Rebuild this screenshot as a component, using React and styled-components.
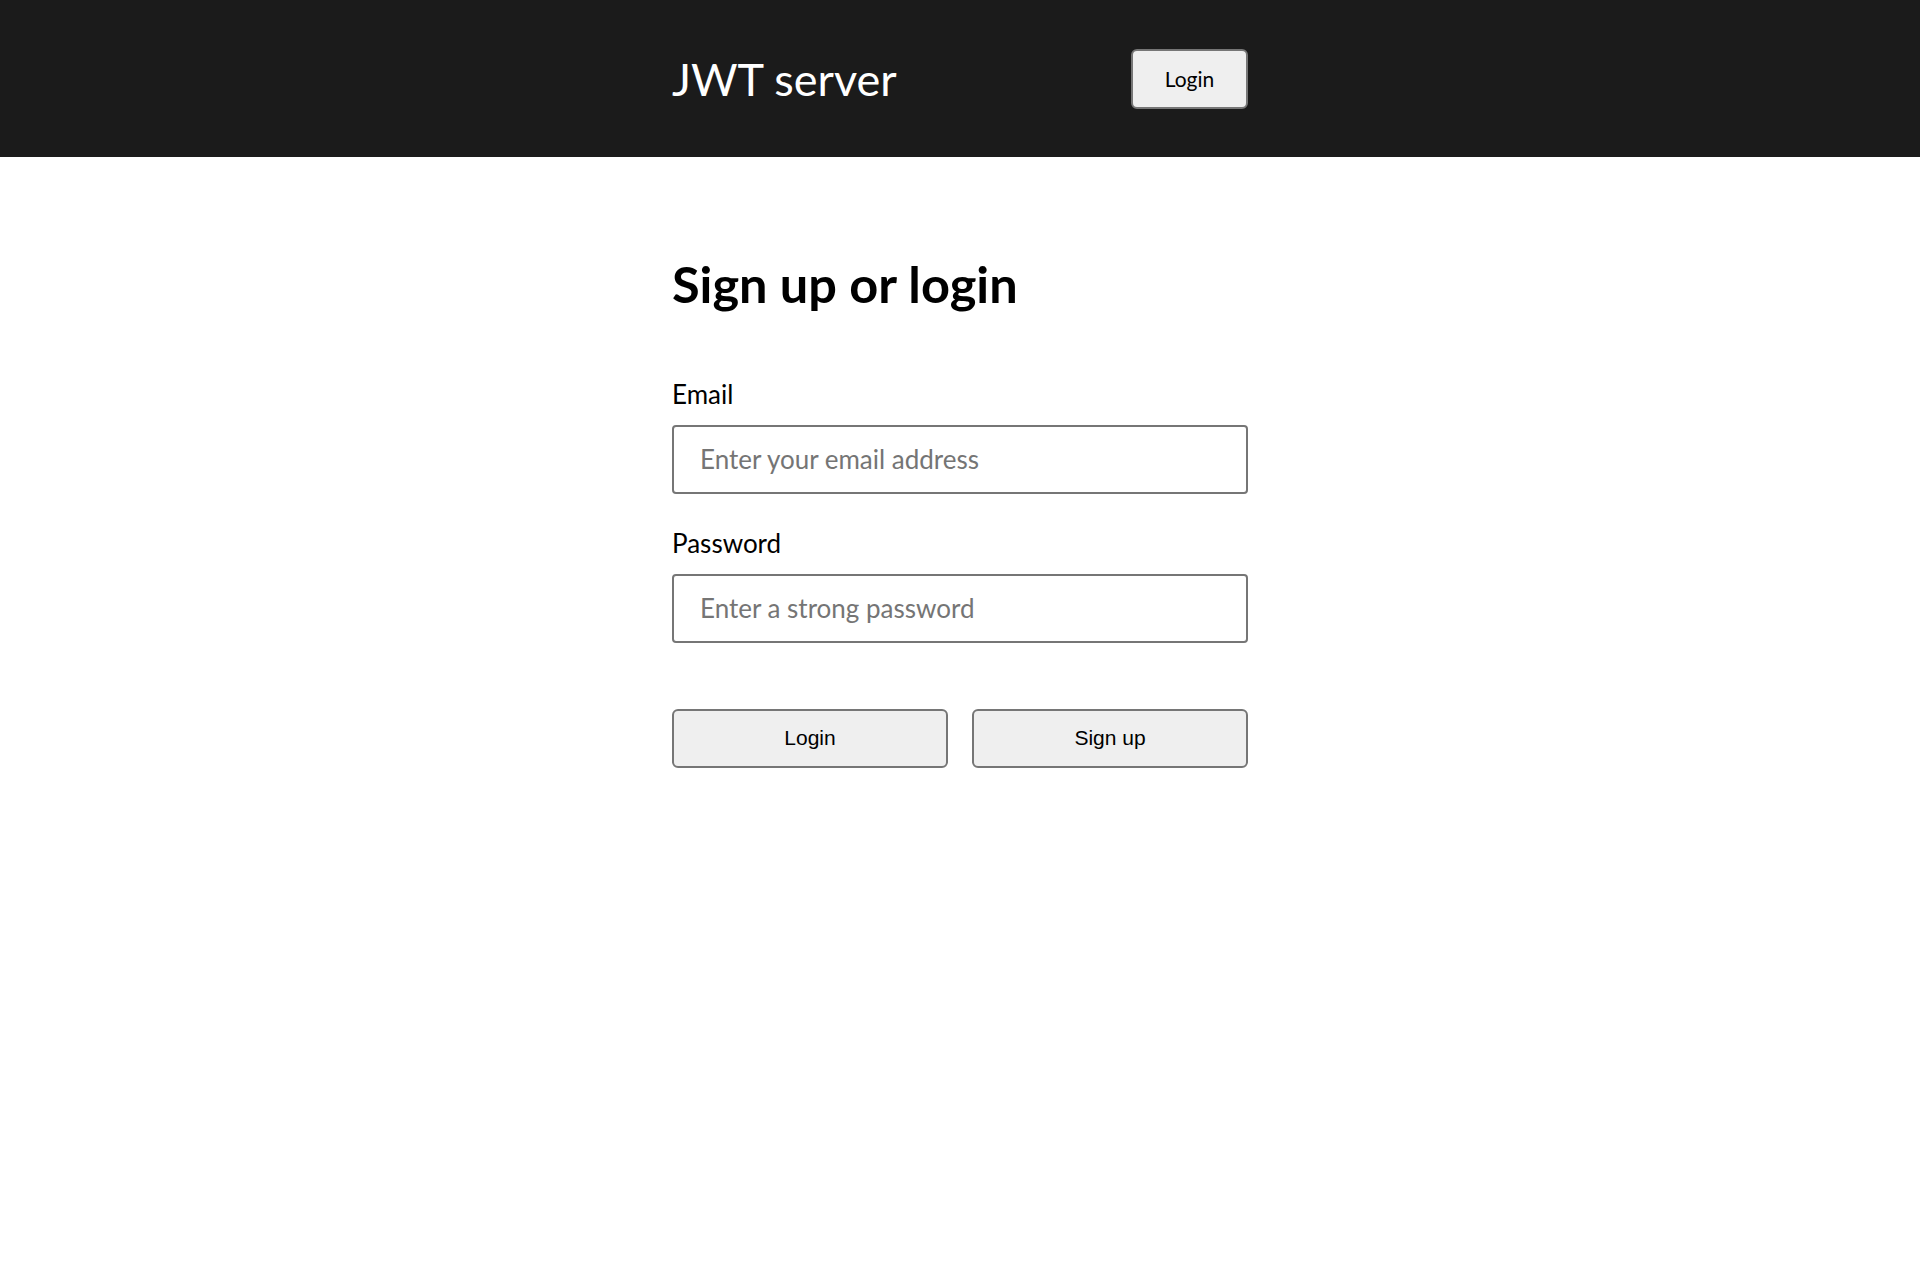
import React from 'react'
import styled, { createGlobalStyle } from 'styled-components'

const GlobalStyle = createGlobalStyle`
	html, body {
		margin: 0;
		padding: 0;
		background: #ffffff;
		font-family: Lato, "Noto Sans", sans-serif;
		color: #000000;
	}
	* {
		box-sizing: border-box;
	}
`

function App() {
	const [email, setEmail] = React.useState('')
	const [password, setPassword] = React.useState('')

	return (
		<>
			<GlobalStyle />
			<Header>
				<HeaderInner>
					<AppName>JWT server</AppName>
					<HeaderButton type='button'>Login</HeaderButton>
				</HeaderInner>
			</Header>
			<Main>
				<Title>Sign up or login</Title>
				<Form onSubmit={(e) => e.preventDefault()}>
					<Field>
						<Label htmlFor='email'>Email</Label>
						<Input
							id='email'
							type='email'
							value={email}
							onChange={(e) => setEmail(e.target.value)}
							placeholder='Enter your email address'
						/>
					</Field>
					<Field>
						<Label htmlFor='password'>Password</Label>
						<Input
							id='password'
							type='password'
							value={password}
							onChange={(e) => setPassword(e.target.value)}
							placeholder='Enter a strong password'
						/>
					</Field>
					<Actions>
						<ActionButton type='submit'>Login</ActionButton>
						<ActionButton type='button'>Sign up</ActionButton>
					</Actions>
				</Form>
			</Main>
		</>
	)
}

export default App

const Header = styled.header`
	background-color: #1b1b1b;
	height: 157px;
	display: flex;
	align-items: center;
`
const HeaderInner = styled.div`
	width: 576px;
	margin: 0 auto;
	display: flex;
	flex-direction: row;
	align-items: center;
	justify-content: space-between;
`
const AppName = styled.div`
	color: #ffffff;
	font-size: 45px;
	font-weight: 400;
	line-height: 1.2;
`
const HeaderButton = styled.button`
	width: 117px;
	height: 60px;
	font-family: Lato, sans-serif;
	font-size: 21px;
	color: #000000;
	background-color: #efefef;
	border: 2px solid #767676;
	border-radius: 6px;
	cursor: pointer;
`
const Main = styled.main`
	width: 576px;
	margin: 0 auto;
	padding-top: 97px;
`
const Title = styled.h1`
	margin: 0;
	font-size: 50.5px;
	font-weight: 700;
	line-height: 1.2;
`
const Form = styled.form`
	margin-top: 64px;
	display: flex;
	flex-direction: column;
	gap: 34px;
`
const Field = styled.div`
	display: flex;
	flex-direction: column;
	gap: 15px;
`
const Label = styled.label`
	font-size: 26px;
	line-height: 1.2;
`
const Input = styled.input`
	height: 69px;
	padding: 0 26px;
	font-family: Lato, sans-serif;
	font-size: 26px;
	color: #000000;
	border: 2px solid #767676;
	border-radius: 4px;
	outline: none;
	&::placeholder {
		color: #757575;
	}
`
const Actions = styled.div`
	margin-top: 32px;
	display: grid;
	grid-template-columns: 1fr 1fr;
	gap: 24px;
`
const ActionButton = styled.button`
	height: 59px;
	font-family: "Liberation Sans", Arial, sans-serif;
	font-size: 21px;
	color: #000000;
	background-color: #efefef;
	border: 2px solid #767676;
	border-radius: 6px;
	cursor: pointer;
`
